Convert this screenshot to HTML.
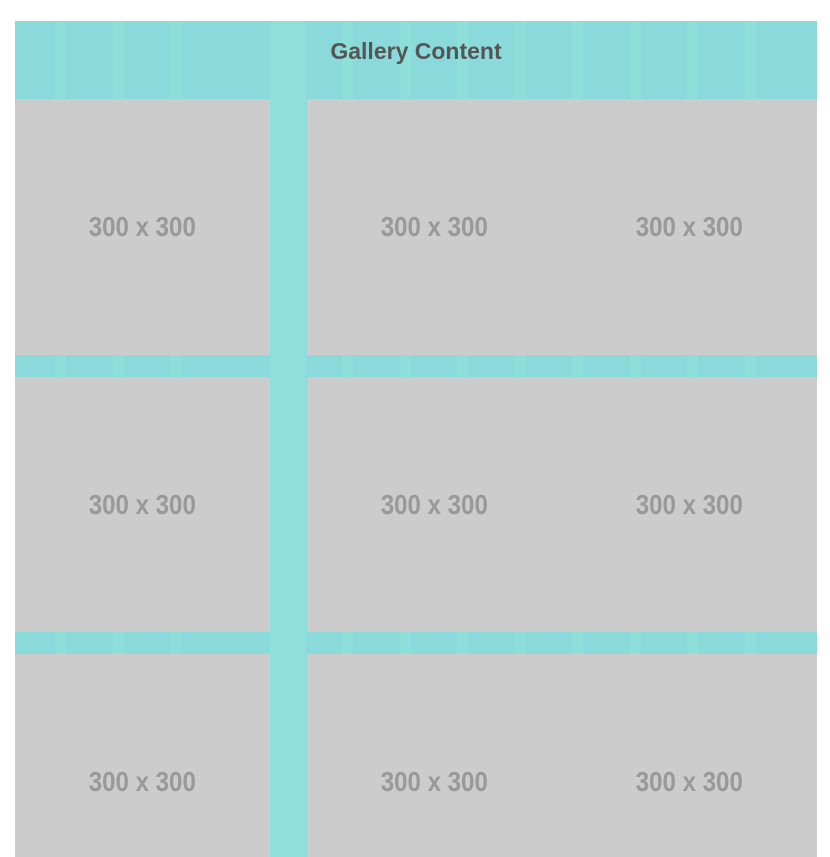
<!DOCTYPE html>
<html><head><style>
html,body{margin:0;padding:0;background:#fff;width:830px;height:857px;overflow:hidden;position:relative}
.wrap{position:absolute;left:15px;top:21px;width:802px;height:836px;background:#8adadb;}
.stripe{position:absolute;top:0;bottom:0;width:11px;background:#8ddfd9}
h1{position:absolute;left:15px;top:21px;width:802px;margin:0;text-align:center;font:bold 23px "Liberation Sans",sans-serif;line-height:60px;color:#555;letter-spacing:0}
.img{position:absolute;background:#ccc;display:flex;align-items:center;justify-content:center;font:bold 28px "Liberation Sans",sans-serif;color:#999}
.img span{display:inline-block;transform:scaleX(0.86)}
</style></head><body>
<div class="wrap">
<div class="stripe" style="left:40px"></div>
<div class="stripe" style="left:98px"></div>
<div class="stripe" style="left:155px"></div>
<div class="stripe" style="left:255px;width:36px;background:#8fe0da"></div>
<div class="stripe" style="left:327px"></div>
<div class="stripe" style="left:385px"></div>
<div class="stripe" style="left:442px"></div>
<div class="stripe" style="left:500px"></div>
<div class="stripe" style="left:557px"></div>
<div class="stripe" style="left:615px"></div>
<div class="stripe" style="left:672px"></div>
<div class="stripe" style="left:730px"></div>
</div>
<h1>Gallery Content</h1>
<div class="img" style="left:15px;top:99px;width:255px;height:256px"><span>300 x 300</span></div>
<div class="img" style="left:307px;top:99px;width:255px;height:256px"><span>300 x 300</span></div>
<div class="img" style="left:562px;top:99px;width:255px;height:256px"><span>300 x 300</span></div>
<div class="img" style="left:15px;top:377px;width:255px;height:255px"><span>300 x 300</span></div>
<div class="img" style="left:307px;top:377px;width:255px;height:255px"><span>300 x 300</span></div>
<div class="img" style="left:562px;top:377px;width:255px;height:255px"><span>300 x 300</span></div>
<div class="img" style="left:15px;top:654px;width:255px;height:203px;align-items:flex-start"><span style="margin-top:112px">300 x 300</span></div>
<div class="img" style="left:307px;top:654px;width:255px;height:203px;align-items:flex-start"><span style="margin-top:112px">300 x 300</span></div>
<div class="img" style="left:562px;top:654px;width:255px;height:203px;align-items:flex-start"><span style="margin-top:112px">300 x 300</span></div>
</body></html>
